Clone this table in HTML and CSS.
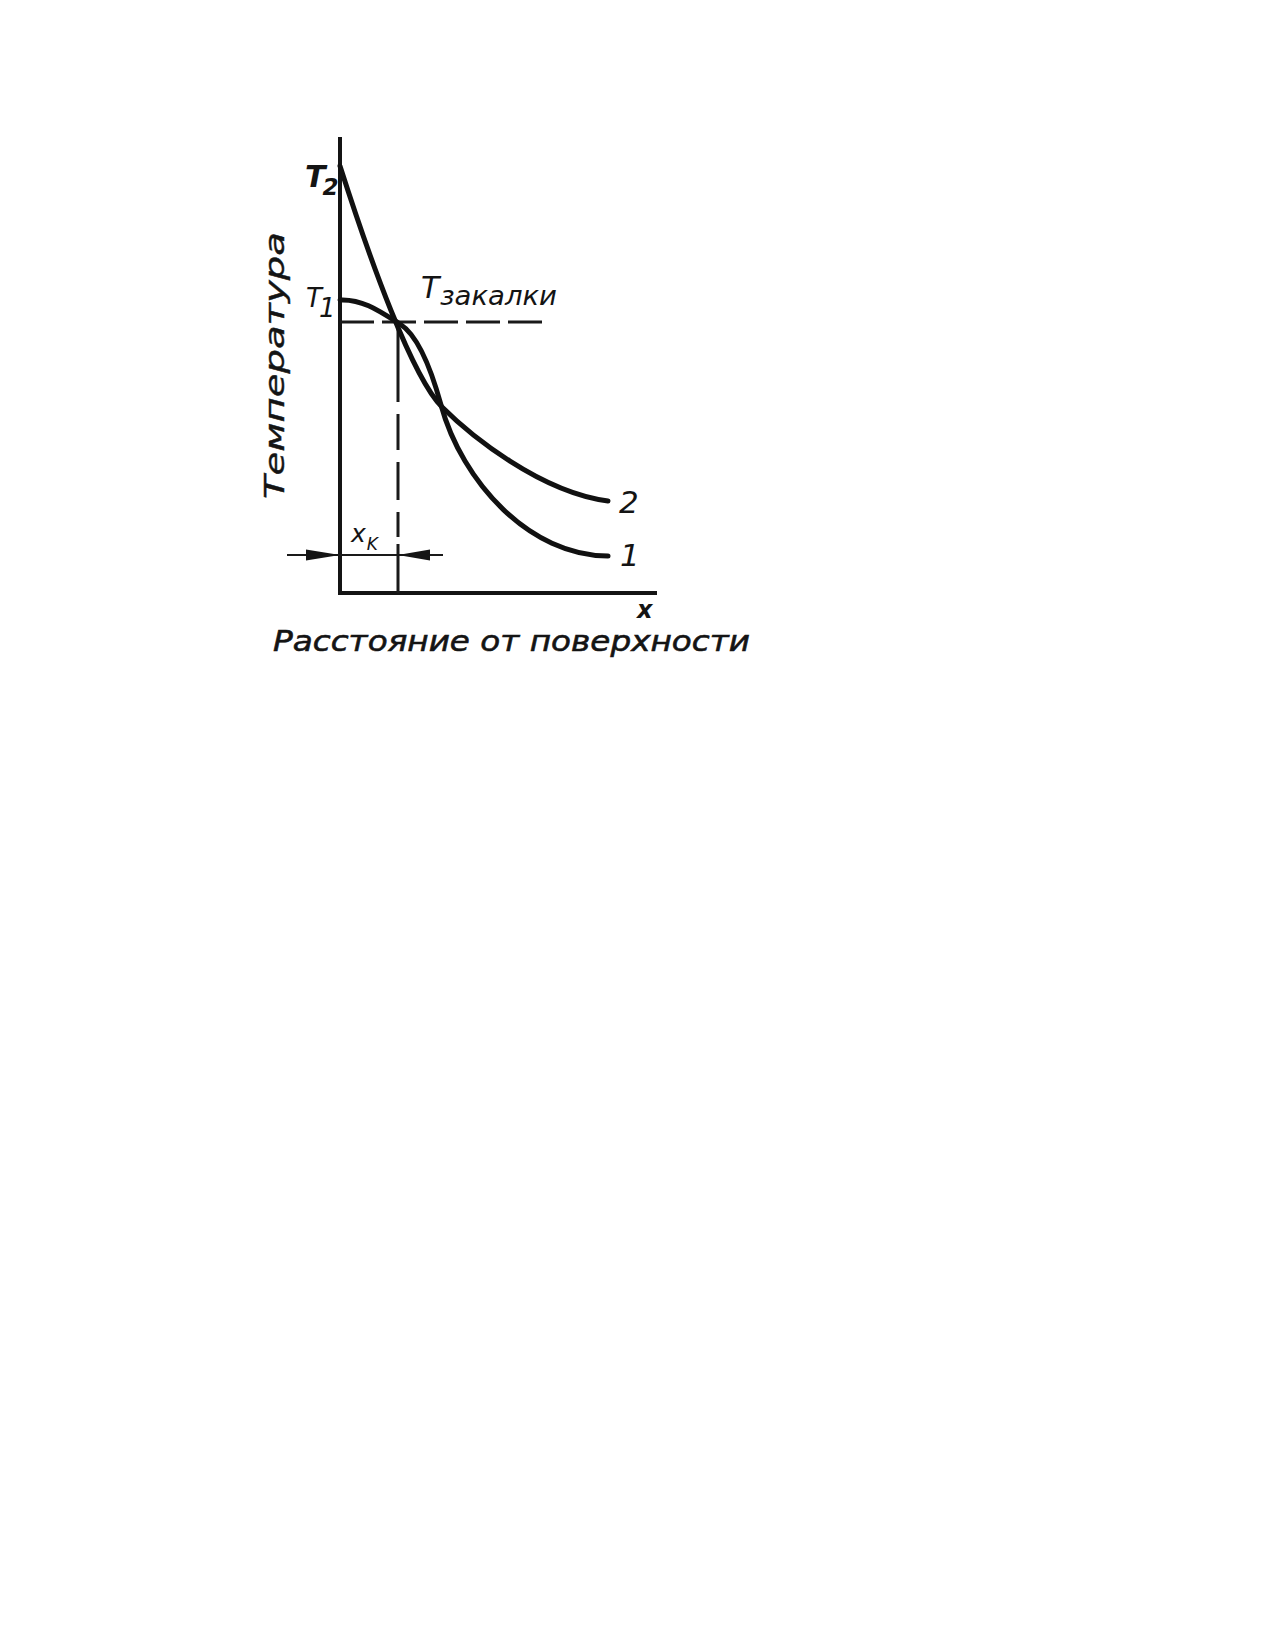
FILE: index.html
```html
<!DOCTYPE html>
<html lang="ru">
<head>
<meta charset="utf-8">
<title>Температура — расстояние от поверхности</title>
<link rel="stylesheet" href="styles.css">
</head>
<body>
<div class="page">
  <svg class="figure" width="1275" height="700" viewBox="0 0 1275 700" xmlns="http://www.w3.org/2000/svg">
    <!-- axes -->
    <path class="axis" d="M340,137 L340,593 L657,593"/>
    <!-- dashed quench level -->
    <path class="dash" d="M340,322 H545" stroke-dasharray="34 8"/>
    <path class="dash" d="M398,322 V402 M398,414 V450 M398,462 V500 M398,512 V537 M398,544 V593"/>
    <!-- curve from T2 (ends at 2) -->
    <path class="curve" d="M340,166 C370,260 412,377 442,407 C470,435 540,492 608,501"/>
    <!-- curve from T1 (ends at 1) -->
    <path class="curve" d="M340,300 C362,299 378,310 400,324 C422,338 435,383 441,405 C462,482 530,556 608,556"/>
    <!-- x_k dimension -->
    <path class="dim" d="M287,555 H443"/>
    <polygon class="head" points="340,555 306,549.5 306,560.5"/>
    <polygon class="head" points="398,555 430,549.5 430,560.5"/>

    <!-- labels -->
    <text class="t t-big b" x="305" y="187">T<tspan class="t-sub2" dx="-3" dy="8">2</tspan></text>

    <text class="t t-mid" x="306" y="307">T<tspan dx="-3" dy="10">1</tspan></text>

    <text class="t t-big" x="421" y="298">T</text>
    <text class="t t-word" x="440" y="305" textLength="117" lengthAdjust="spacingAndGlyphs">закалки</text>

    <text class="t t-xk" x="351" y="542">x<tspan class="t-k" dx="1" dy="8">K</tspan></text>

    <text class="t t-num" x="619" y="513">2</text>
    <text class="t t-num" x="620" y="566">1</text>

    <text class="t t-x" x="637" y="618">x</text>

    <text class="t t-cap" x="273" y="651" textLength="477" lengthAdjust="spacingAndGlyphs">Расстояние от поверхности</text>
    <text class="t t-ylab" transform="translate(284,499) rotate(-90)" textLength="267" lengthAdjust="spacingAndGlyphs">Температура</text>
  </svg>
</div>
</body>
</html>
```
FILE: styles.css
```css
html, body {
  margin: 0;
  padding: 0;
  background: #ffffff;
}

.page {
  width: 1275px;
  height: 1650px;
  background: #ffffff;
}

.figure {
  display: block;
}

.axis {
  fill: none;
  stroke: #141414;
  stroke-width: 4;
  stroke-linejoin: miter;
}

.dash {
  fill: none;
  stroke: #1a1a1a;
  stroke-width: 3;
}

.curve {
  fill: none;
  stroke: #111111;
  stroke-width: 5;
  stroke-linecap: round;
  stroke-linejoin: round;
}

.dim {
  fill: none;
  stroke: #1a1a1a;
  stroke-width: 2;
}

.head {
  fill: #151515;
}

.t {
  font-family: "DejaVu Sans", "Liberation Sans", sans-serif;
  font-style: italic;
  fill: #141414;
}

.b {
  font-weight: bold;
}

.t-big {
  font-size: 30px;
}

.t-sub2 {
  font-size: 23px;
  font-weight: bold;
}

.t-mid {
  font-size: 26px;
}

.t-word {
  font-size: 27px;
}

.t-xk {
  font-size: 25px;
}

.t-k {
  font-size: 17px;
}

.t-num {
  font-size: 31px;
}

.t-x {
  font-size: 24px;
  font-weight: bold;
}

.t-cap {
  font-size: 29px;
  stroke: #141414;
  stroke-width: 0.6px;
}

.t-ylab {
  font-size: 27px;
  stroke: #141414;
  stroke-width: 0.4px;
}
```
